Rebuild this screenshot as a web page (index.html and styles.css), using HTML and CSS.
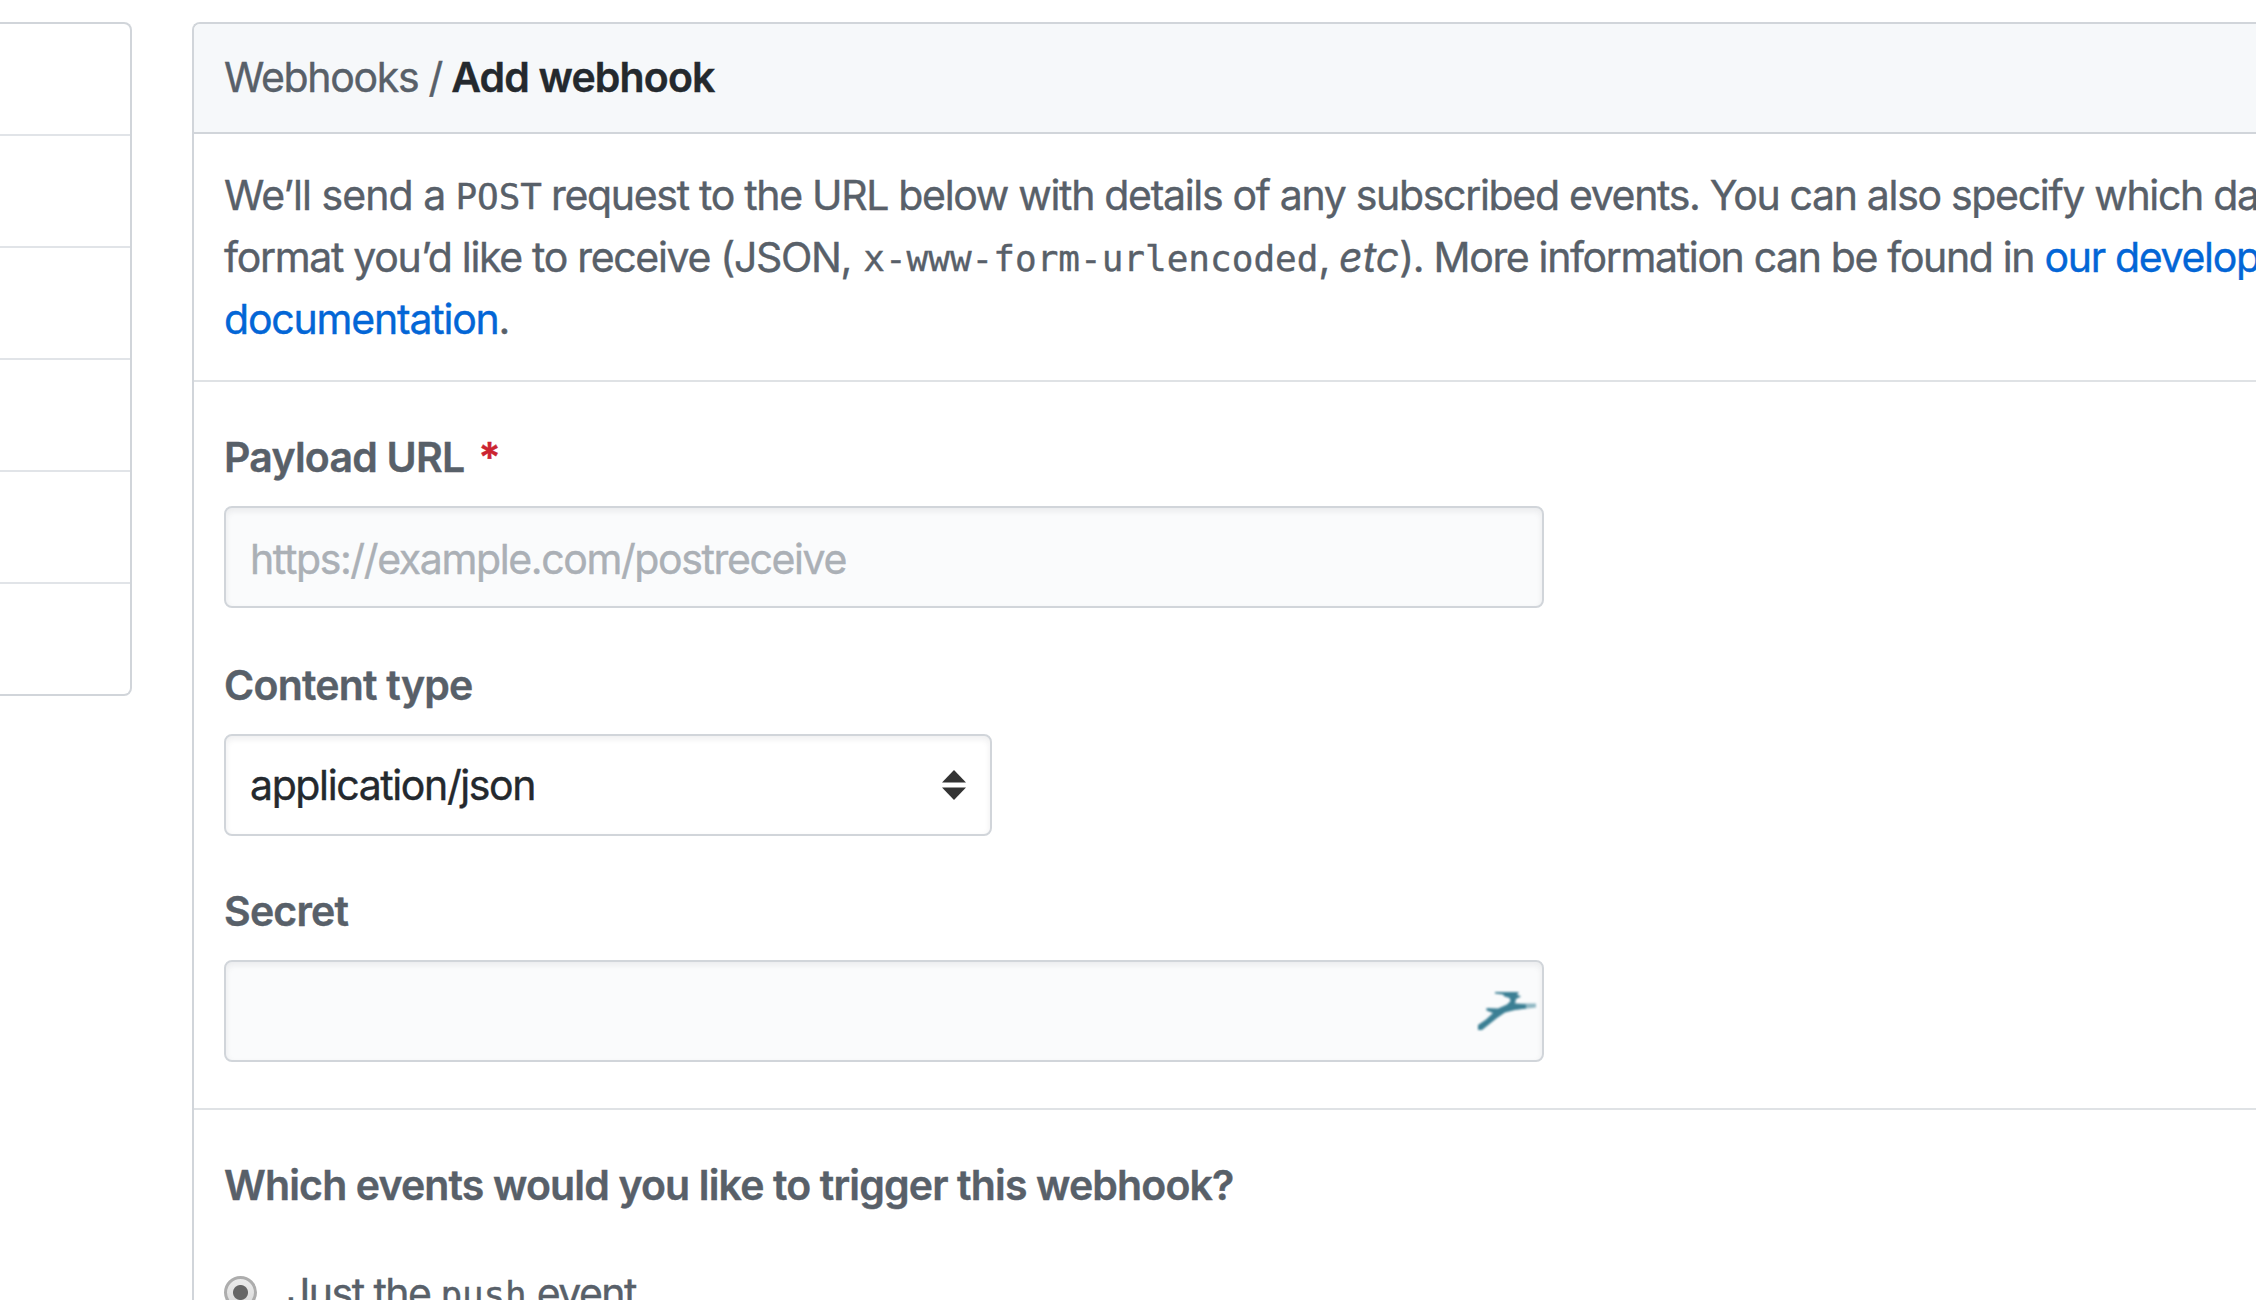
FILE: index.html
```html
<!DOCTYPE html>
<html lang="en">
<head>
<meta charset="utf-8">
<title>Add webhook</title>
<link rel="stylesheet" href="styles.css">
</head>
<body>
<div class="layout">
  <nav class="menu">
    <a class="menu-item"></a>
    <a class="menu-item"></a>
    <a class="menu-item"></a>
    <a class="menu-item"></a>
    <a class="menu-item"></a>
    <a class="menu-item"></a>
  </nav>
  <main class="panel">
    <header class="panel-header"><span class="crumb">Webhooks /</span> <strong class="current">Add webhook</strong></header>
    <section class="intro">
      <p><span class="lead">We’ll send a</span> <code class="verb">POST</code> request to the URL below with details of any subscribed events. You can also specify which data<br>format you’d like to receive (JSON, <code class="mime">x-www-form-urlencoded</code>, <em>etc</em>). <span class="more">More information can be found in</span> <a class="link" href="#">our developer<br><span class="doc">documentation</span></a>.</p>
    </section>
    <section class="fields">
      <div class="field">
        <label class="label" for="url">Payload URL<span class="required">*</span></label>
        <input class="control" id="url" type="text" placeholder="https://example.com/postreceive">
      </div>
      <div class="field type">
        <label class="label">Content type</label>
        <div class="control select">
          <span>application/json</span>
          <svg class="arrows" width="24" height="30" viewBox="0 0 24 30"><path d="M12 0 24 12.500H0Z" fill="#333"/><path d="M0 17.500H24L12 30Z" fill="#333"/></svg>
        </div>
      </div>
      <div class="field">
        <label class="label">Secret</label>
        <div class="control secret">
          <svg class="antelope" width="58" height="38" viewBox="0 0 58 38">
            <path d="M36 11.500 58 11.500V15.500L35 18Z" fill="#8fb7c3"/>
            <path d="M0 38V33L8 27.500 15 21 8.500 18.500V16L20 16.500 29 12.500 32.500 9 31.500 6 26.500 4.500 25 2.500 17 1.500V0H41L39 2.500 43 4.500 38 7 37 11.500 48 12.500V16.500L37 18 27 20.500 19 26 4 38Z" fill="#3b7f94"/>
          </svg>
        </div>
      </div>
    </section>
    <section class="events">
      <h2 class="question">Which events would you like to trigger this webhook?</h2>
      <label class="choice"><span class="radio"></span><span class="choice-text">Just the <code>push</code> event</span></label>
    </section>
  </main>
</div>
</body>
</html>
```
FILE: styles.css
```css
* { box-sizing: border-box; }

body {
  margin: 0;
  height: 1300px;
  overflow: hidden;
  background: #fff;
  color: #586069;
  font-family: Inter, "Liberation Sans", sans-serif;
  font-size: 41px;
  line-height: 62px;
  letter-spacing: -1.32px;
  -webkit-text-stroke: 0.4px;
}

.layout {
  display: flex;
  align-items: flex-start;
  gap: 60px;
  height: 1300px;
  padding-top: 22px;
}

.menu {
  flex: none;
  width: 132px;
  border: 2px solid #d1d5da;
  border-left: 0;
  border-radius: 0 8px 8px 0;
}

.menu-item {
  display: block;
  height: 112px;
  border-bottom: 2px solid #e1e4e8;
}

.menu-item:last-child {
  height: 110px;
  border-bottom: 0;
}

.panel {
  flex: 1;
  min-width: 0;
  height: 1278px;
  border: 2px solid #d1d5da;
  border-width: 2px 0 0 2px;
  border-radius: 8px 0 0 0;
  overflow: hidden;
}

.panel-header {
  height: 110px;
  padding: 22px 30px;
  background: #f6f8fa;
  border-bottom: 2px solid #d1d5da;
  white-space: nowrap;
}

.current {
  margin-left: -1px;
  color: #24292e;
  font-weight: 600;
  letter-spacing: -0.85px;
}

.intro {
  height: 248px;
  padding: 30px;
  border-bottom: 2px solid #dfe2e5;
  white-space: nowrap;
}

p { margin: 0; }

.lead { letter-spacing: -0.95px; }

code {
  font-family: "DejaVu Sans Mono", "Liberation Mono", monospace;
  font-size: 36px;
  line-height: 1;
  letter-spacing: -0.1px;
  vertical-align: 1px;
}

.verb { margin-right: -1px; }

.mime {
  margin-left: 2px;
  letter-spacing: 0;
}

em { letter-spacing: 0; }

.more { letter-spacing: -1.36px; }

.link {
  color: #0366d6;
  text-decoration: none;
}

.doc { letter-spacing: -1.2px; }

.fields {
  height: 728px;
  padding: 44px 30px 0;
  border-bottom: 2px solid #dfe2e5;
}

.field { margin-bottom: 46px; }

.type { margin-bottom: 44px; }

.label {
  display: block;
  height: 80px;
  font-weight: 600;
  letter-spacing: -0.77px;
}

.required {
  margin-left: 14px;
  color: #cb2431;
}

.control {
  display: flex;
  align-items: center;
  width: 1320px;
  height: 102px;
  padding: 4px 24px 0;
  border: 2px solid #d1d5da;
  border-radius: 8px;
  background: #fafbfc;
  box-shadow: inset 0 3px 6px rgba(27, 31, 35, 0.075);
  color: #24292e;
  font: inherit;
  letter-spacing: -1.38px;
}

.control::placeholder {
  color: #abb0b6;
  opacity: 1;
}

.select {
  justify-content: space-between;
  width: 768px;
  padding-top: 0;
  background: #fff;
}

.secret {
  justify-content: flex-end;
  padding: 0 6px 0 0;
}

.antelope { filter: blur(0.9px); }

.events { padding: 44px 30px 0; }

.question {
  margin: 0;
  font-size: 41px;
  font-weight: 600;
  letter-spacing: -0.85px;
}

.choice {
  display: flex;
  align-items: flex-start;
  margin-top: 46px;
}

.radio {
  width: 33px;
  height: 33px;
  margin-top: 14px;
  border: 3px solid #adadad;
  border-radius: 50%;
  background: radial-gradient(circle, #666 7px, transparent 8px), linear-gradient(#ececec, #dadada);
}

.choice-text {
  margin-left: 30px;
  letter-spacing: -1.55px;
}
```
